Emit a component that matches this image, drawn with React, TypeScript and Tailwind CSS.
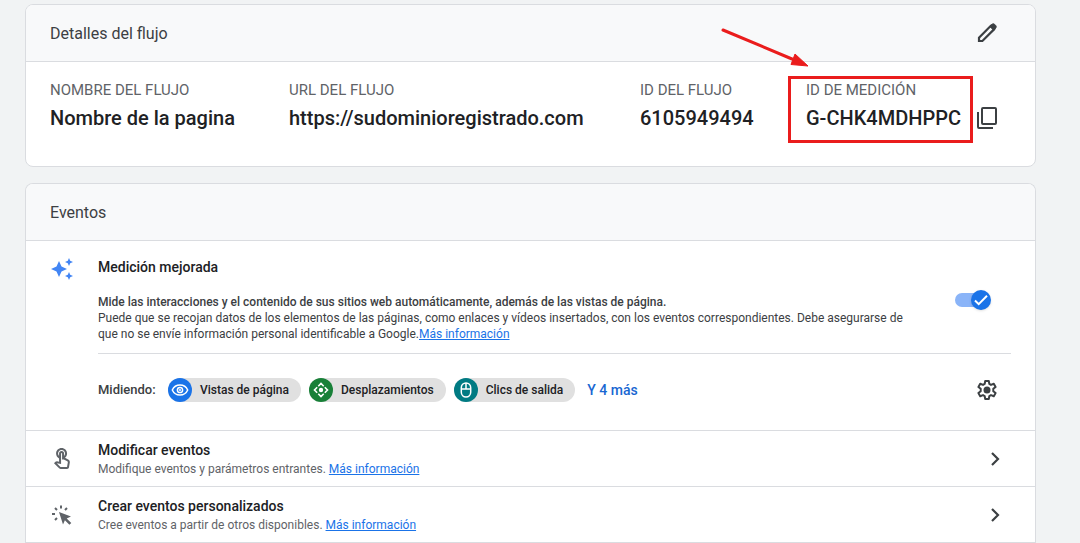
import type { ReactNode } from 'react'
import { MdOutlineTouchApp } from 'react-icons/md'

const STREAM_FIELDS = [
  { label: 'NOMBRE DEL FLUJO', value: 'Nombre de la pagina' },
  { label: 'URL DEL FLUJO', value: 'https://sudominioregistrado.com' },
  { label: 'ID DEL FLUJO', value: '6105949494' },
  { label: 'ID DE MEDICIÓN', value: 'G-CHK4MDHPPC', highlighted: true },
]

const PencilIcon = () => (
  <svg viewBox="0 0 24 24" className="w-6 h-6" fill="none" stroke="#3c4043">
    <path d="M4 20v-3.400L15.600 5l3.400 3.400L7.400 20z" strokeWidth="2.200" />
    <path d="M14.800 5.200L17 3.200Q18.400 2.200 19.700 3.400L20.600 4.300Q21.800 5.700 20.800 7L18.800 9.200z" fill="#3c4043" strokeWidth="1" />
  </svg>
)

const CopyIcon = () => (
  <svg viewBox="0 0 24 24" className="w-6 h-6" fill="none" stroke="#3c4043" strokeWidth="2">
    <rect x="7" y="2" width="14" height="16" rx="1" />
    <path d="M3 6v15q0 1 1 1h14" />
  </svg>
)

const SparkleIcon = () => (
  <svg viewBox="0 0 24 24" className="w-6 h-6" fill="#4285f4">
    <path d="M9 4l2.500 5.500L17 12l-5.500 2.500L9 20l-2.500-5.500L1 12l5.500-2.500z" />
    <path d="M19 1l1.200 2.800L23 5l-2.800 1.200L19 9l-1.200-2.800L15 5l2.800-1.200z" />
    <path d="M19 15l1.200 2.800L23 19l-2.800 1.200L19 23l-1.200-2.800L15 19l2.800-1.200z" />
  </svg>
)

const GearIcon = () => (
  <svg viewBox="0 0 24 24" className="w-6 h-6" fill="none" stroke="#3c4043" strokeWidth="2" strokeLinejoin="round">
    <path d="M10.200 3h3.600l.5 2.900 1.700 1 2.800-1.100 1.800 3.100-2.300 1.900v2.400l2.300 1.900-1.800 3.100-2.800-1.100-1.700 1-.5 2.900h-3.600l-.5-2.900-1.700-1-2.800 1.100-1.800-3.100 2.300-1.900v-2.400L3.400 8.900l1.800-3.100L8 6.900l1.700-1z" />
    <circle cx="12" cy="12" r="3.500" fill="#3c4043" stroke="none" />
  </svg>
)

const ClickIcon = () => (
  <svg viewBox="0 0 24 24" className="w-6 h-6" fill="#5f6368">
    <path d="M9 9l12 4.500-4.300 1.900 4.600 4.500-1.900 1.900-4.500-4.600L13 21.500z" />
    <path d="M11 2.500v3M5 5l2 2M17 5l-2 2M2 11h3M5 17l2-2" fill="none" stroke="#5f6368" strokeWidth="2" />
  </svg>
)

const EyeIcon = () => (
  <svg viewBox="0 0 24 24" className="w-6 h-6" fill="none" stroke="white" strokeWidth="1.500">
    <path d="M4.300 12C7.300 5.300 16.700 5.300 19.700 12C16.700 18.700 7.300 18.700 4.300 12z" />
    <circle cx="12" cy="12" r="2.600" />
    <circle cx="12" cy="12" r="1" fill="white" stroke="none" />
  </svg>
)

const ScrollIcon = () => (
  <svg viewBox="0 0 24 24" className="w-6 h-6" fill="none" stroke="white" strokeWidth="1.600">
    <path d="M9.300 8.200L12 5.500l2.700 2.700M9.300 15.800L12 18.500l2.700-2.700M8.200 9.300L5.500 12l2.700 2.700M15.800 9.300L18.500 12l-2.700 2.700" />
    <circle cx="12" cy="12" r="2.200" fill="white" stroke="none" />
  </svg>
)

const MouseIcon = () => (
  <svg viewBox="0 0 24 24" className="w-6 h-6" fill="none" stroke="white" strokeWidth="1.500">
    <rect x="7.300" y="5" width="9.400" height="14" rx="4.700" />
    <path d="M7.300 11h9.400M12 5v6" />
  </svg>
)

const ChevronIcon = () => (
  <svg viewBox="0 0 24 24" className="w-6 h-6" fill="none" stroke="#3c4043" strokeWidth="2.200">
    <path d="M9 6l6 6-6 6" />
  </svg>
)

const CHIPS = [
  { name: 'Vistas de página', color: 'bg-[#1a73e8]', icon: <EyeIcon /> },
  { name: 'Desplazamientos', color: 'bg-[#188038]', icon: <ScrollIcon /> },
  { name: 'Clics de salida', color: 'bg-[#007b83]', icon: <MouseIcon /> },
]

const EVENT_ROWS = [
  {
    title: 'Modificar eventos',
    text: 'Modifique eventos y parámetros entrantes.',
    icon: <MdOutlineTouchApp className="w-6 h-6 text-[#5f6368]" />,
  },
  {
    title: 'Crear eventos personalizados',
    text: 'Cree eventos a partir de otros disponibles.',
    icon: <ClickIcon />,
  },
]

const MoreLink = () => (
  <a href="#" className="text-[#1a73e8] underline">Más información</a>
)

// Red frame and arrow that point out the measurement ID
const Highlight = () => (
  <>
    <div className="absolute -left-[18px] -right-[10px] -top-1 -bottom-[11px] border-3 border-[#ea1c1c] pointer-events-none" />
    <svg viewBox="0 0 90 42" className="absolute -left-[86px] -top-[54px] w-[90px] h-[42px] pointer-events-none">
      <path d="M3 4L72 33" stroke="#ea1c1c" strokeWidth="3" strokeLinecap="round" />
      <path d="M75 28L88 40L71 38.500z" fill="#ea1c1c" stroke="#ea1c1c" />
    </svg>
  </>
)

type CardProps = { title: string; action?: ReactNode; openBottom?: boolean; children: ReactNode }

const Card = ({ title, action, openBottom, children }: CardProps) => (
  <section className={`bg-white border border-[#dadce0] overflow-hidden ${openBottom ? 'rounded-t-lg border-b-0' : 'rounded-lg'}`}>
    <header className="flex items-center justify-between h-[57px] pl-6 pr-9 bg-[#f8f9fa] border-b border-[#dadce0]">
      <h2 className="pt-0.5 text-base text-[#3c4043]">{title}</h2>
      {action}
    </header>
    {children}
  </section>
)

const App = () => {
  return (
    <main className="min-h-screen bg-[#f1f3f4] pt-1 pl-[25px] pr-11 flex flex-col gap-4 font-['Roboto',sans-serif] text-[#202124]">
      <Card
        title="Detalles del flujo"
        action={<button type="button" aria-label="Editar"><PencilIcon /></button>}
      >
        <div className="flex items-end gap-3 pt-[18px] pb-[34px] pl-6 pr-9">
          <dl className="flex-1 grid grid-cols-[239fr_351fr_166fr_157fr] whitespace-nowrap">
            {STREAM_FIELDS.map((field) => (
              <div key={field.label} className="relative">
                <dt className="text-[15px] leading-5 text-[#5f6368]">{field.label}</dt>
                <dd className="mt-1 text-xl leading-7 font-medium">{field.value}</dd>
                {field.highlighted && <Highlight />}
              </div>
            ))}
          </dl>
          <button type="button" aria-label="Copiar" className="mb-0.5"><CopyIcon /></button>
        </div>
      </Card>

      <Card title="Eventos" openBottom>
        <div className="flex pl-6 pr-6 pt-4 border-b border-[#dadce0]">
          <div className="w-12 shrink-0"><SparkleIcon /></div>
          <div className="flex-1">
            <h3 className="text-sm leading-5 font-medium">Medición mejorada</h3>
            <div className="flex justify-between pt-[17px] pb-[11px] border-b border-[#dadce0]">
              <div className="max-w-[850px] text-xs leading-4 text-[#3c4043]">
                <p className="font-medium">Mide las interacciones y el contenido de sus sitios web automáticamente, además de las vistas de página.</p>
                <p>
                  Puede que se recojan datos de los elementos de las páginas, como enlaces y vídeos insertados, con los eventos correspondientes. Debe asegurarse de
                  <br />
                  que no se envíe información personal identificable a Google.<MoreLink />
                </p>
              </div>
              <label className="relative flex items-center w-9 h-3 shrink-0 mr-5">
                <input type="checkbox" role="switch" aria-label="Medición mejorada" defaultChecked className="shrink-0 appearance-none w-8 h-3.5 rounded-full bg-[#8ab4f8]" />
                <span className="absolute right-0 flex items-center justify-center w-5 h-5 rounded-full bg-[#1a73e8] shadow">
                  <svg viewBox="0 0 20 20" className="w-5 h-5" fill="none" stroke="white" strokeWidth="2">
                    <path d="M4 10.500l3.700 3.700L16 5.800" />
                  </svg>
                </span>
              </label>
            </div>
            <div className="flex items-center pt-6 pb-7 pr-3">
              <span className="w-[70px] text-[13px] leading-4 font-medium text-[#3c4043]">Midiendo:</span>
              <ul className="flex gap-2">
                {CHIPS.map((chip) => (
                  <li key={chip.name} className="flex items-center h-6 gap-2 pr-3 rounded-full bg-[#e0e0e0] text-xs font-medium">
                    <span className={`${chip.color} w-6 h-6 rounded-full`}>{chip.icon}</span>
                    {chip.name}
                  </li>
                ))}
              </ul>
              <button type="button" className="ml-3 text-sm leading-4 font-medium text-[#1967d2]">Y 4 más</button>
              <button type="button" aria-label="Configuración" className="ml-auto"><GearIcon /></button>
            </div>
          </div>
        </div>

        {EVENT_ROWS.map((row) => (
          <div key={row.title} className="flex items-center h-14 pl-6 pr-7 border-b border-[#dadce0]">
            <div className="w-12 shrink-0">{row.icon}</div>
            <div className="flex-1 pt-[3px]">
              <h3 className="mb-px text-sm leading-4 font-medium">{row.title}</h3>
              <p className="text-xs leading-5 text-[#5f6368]">{row.text} <MoreLink /></p>
            </div>
            <button type="button" aria-label={row.title}><ChevronIcon /></button>
          </div>
        ))}
      </Card>
    </main>
  )
}

export default App
